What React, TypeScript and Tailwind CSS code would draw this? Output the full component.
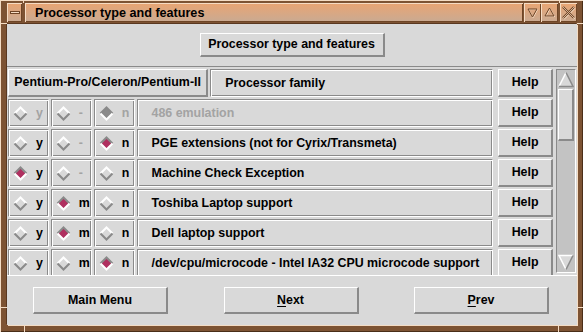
import React from "react";

const raised =
  "border-t border-l border-r-2 border-b-2 border-t-white border-l-white border-r-[#8a8a8a] border-b-[#8a8a8a]";
const groove =
  "border border-t-[#8a8a8a] border-l-[#8a8a8a] border-r-white border-b-white shadow-[inset_1px_1px_0_#ffffff,inset_-1px_-1px_0_#8a8a8a]";

function Diamond({ on, disabled }: { on: boolean; disabled?: boolean }) {
  const top = on ? "#8a8a8a" : "#ffffff";
  const bottom = on ? "#ffffff" : "#8a8a8a";
  const fill = on ? (disabled ? "#8c8c8c" : "#b03060") : "none";
  return (
    <svg width="15" height="15" viewBox="0 0 15 15" className="shrink-0">
      <polygon points="7.5,1.5 13.5,7.5 7.5,13.5 1.5,7.5" fill={fill} />
      <polyline points="1.5,7.5 7.5,1.5 13.5,7.5" fill="none" stroke={top} strokeWidth="2" />
      <polyline points="13.5,7.5 7.5,13.5 1.5,7.5" fill="none" stroke={bottom} strokeWidth="2" />
    </svg>
  );
}

function Cell({
  letter,
  on,
  disabled,
}: {
  letter: string;
  on: boolean;
  disabled?: boolean;
}) {
  return (
    <div className={`w-[41px] h-full flex items-center pl-[4px] gap-[8px] ${groove}`}>
      <Diamond on={on} disabled={disabled} />
      <span className={disabled ? "text-[#a3a3a3]" : "text-black"}>{letter}</span>
    </div>
  );
}

type Row = {
  label: string;
  disabled?: boolean;
  sel: "y" | "m" | "n";
  hasM: boolean;
};

const rows: Row[] = [
  { label: "486 emulation", disabled: true, sel: "n", hasM: false },
  { label: "PGE extensions (not for Cyrix/Transmeta)", sel: "n", hasM: false },
  { label: "Machine Check Exception", sel: "y", hasM: false },
  { label: "Toshiba Laptop support", sel: "m", hasM: true },
  { label: "Dell laptop support", sel: "m", hasM: true },
  { label: "/dev/cpu/microcode - Intel IA32 CPU microcode support", sel: "n", hasM: true },
];

function HelpBtn() {
  return (
    <div className={`w-[55px] h-full flex items-center justify-center ${raised}`}>Help</div>
  );
}

function TitleBtn({ children }: { children: React.ReactNode }) {
  return (
    <div className="w-[17px] h-full bg-gradient-to-b from-[#e9a472] to-[#c9aa92] shadow-[inset_1px_1px_0_#f6dcc4,inset_-1px_-1px_0_#6e4526] flex items-center justify-center">
      {children}
    </div>
  );
}

export default function App() {
  return (
    <div className="w-[583px] h-[332px] bg-[#7d5333] relative overflow-hidden shadow-[inset_1px_1px_0_#f4dcc4,inset_-1px_-1px_0_#4a2e18] font-['Liberation_Sans',Arial,sans-serif] font-bold text-[12.4px] text-black leading-none">
      {/* frame corner notches */}
      <div className="absolute left-[23px] top-0 w-[1px] h-[3px] bg-[#f4dcc4]" />
      <div className="absolute left-[559px] top-0 w-[1px] h-[3px] bg-[#f4dcc4]" />
      <div className="absolute left-0 top-[23px] w-[7px] h-[1px] bg-[#f4dcc4]" />
      <div className="absolute right-0 top-[23px] w-[6px] h-[1px] bg-[#f4dcc4]" />
      <div className="absolute left-0 top-[307px] w-[7px] h-[1px] bg-[#f4dcc4]" />
      <div className="absolute right-0 top-[307px] w-[6px] h-[1px] bg-[#f4dcc4]" />
      <div className="absolute left-[24px] bottom-0 w-[1px] h-[7px] bg-[#f4dcc4]" />
      <div className="absolute left-[558px] bottom-0 w-[1px] h-[7px] bg-[#f4dcc4]" />

      <div className="flex flex-col h-full pl-[7px] pr-[6px] pt-[3px] pb-[7px]">
        {/* title bar */}
        <div className="h-[19px] flex shrink-0 mb-[2px]">
          <div className="w-[15px] h-full bg-gradient-to-b from-[#e9a472] to-[#c9aa92] shadow-[inset_1px_1px_0_#f6dcc4,inset_-1px_-1px_0_#6e4526] flex items-center justify-center">
            <div className="w-[10px] h-[3px] bg-[#f6dcc4] border border-[#6e4526]" />
          </div>
          <div className="w-[3px]" />
          <div className="flex-1 h-full bg-gradient-to-b from-[#e9a472] to-[#c9aa92] shadow-[inset_1px_1px_0_#f6dcc4,inset_-1px_-1px_0_#6e4526] flex items-center pl-[10px] pt-[2px] text-[12.6px]">
            Processor type and features
          </div>
          <div className="w-[1px]" />
          <TitleBtn>
            <svg width="13" height="13" viewBox="0 0 13 13">
              <polygon points="2,3 11,3 6.5,11" fill="none" stroke="#f6dcc4" strokeWidth="1" transform="translate(0.6,0.6)" />
              <polygon points="2,3 11,3 6.5,11" fill="none" stroke="#6e4526" strokeWidth="1" />
            </svg>
          </TitleBtn>
          <TitleBtn>
            <svg width="13" height="13" viewBox="0 0 13 13">
              <polygon points="6.5,2 11,10 2,10" fill="none" stroke="#f6dcc4" strokeWidth="1" transform="translate(0.6,0.6)" />
              <polygon points="6.5,2 11,10 2,10" fill="none" stroke="#6e4526" strokeWidth="1" />
            </svg>
          </TitleBtn>
          <div className="w-[2px]" />
          <TitleBtn>
            <svg width="15" height="15" viewBox="0 0 15 15">
              <path d="M2,2 L13,13 M13,2 L2,13" fill="none" stroke="#f6dcc4" strokeWidth="2.4" transform="translate(0.6,0.6)" />
              <path d="M2,2 L13,13 M13,2 L2,13" fill="none" stroke="#6e4526" strokeWidth="2.4" />
              <path d="M2,2 L13,13 M13,2 L2,13" fill="none" stroke="#d8b294" strokeWidth="1" />
            </svg>
          </TitleBtn>
        </div>

        {/* content */}
        <div className="flex-1 bg-[#d9d9d9] flex flex-col shadow-[-1px_-1px_0_#5a3820,1px_1px_0_#f4dcc4]">
          <div className="pt-[9px] flex justify-center shrink-0">
            <div className={`w-[185px] h-[24px] flex items-center justify-center ${raised}`}>
              Processor type and features
            </div>
          </div>

          <div className="mt-[9px] h-[210px] border-t border-b border-t-[#8a8a8a] border-b-white flex shrink-0 overflow-hidden">
            <div className="flex-1 overflow-hidden pt-[2px] pl-[1px] flex flex-col gap-[2px]">
              <div className="h-[28px] flex gap-[2px] shrink-0">
                <div className={`w-[201px] h-full flex items-center justify-center ${raised}`}>
                  Pentium-Pro/Celeron/Pentium-II
                </div>
                <div className={`w-[284px] h-full flex items-center pl-[14px] ${groove}`}>
                  Processor family
                </div>
                <div className="w-[1px]" />
                <HelpBtn />
              </div>
              {rows.map((r) => (
                <div key={r.label} className="h-[28px] flex gap-[2px] shrink-0">
                  <Cell letter="y" on={r.sel === "y"} disabled={r.disabled} />
                  <Cell letter={r.hasM ? "m" : "-"} on={r.sel === "m"} disabled={r.disabled || !r.hasM} />
                  <Cell letter="n" on={r.sel === "n"} disabled={r.disabled} />
                  <div
                    className={`w-[358px] h-full flex items-center pl-[14px] ${groove} ${
                      r.disabled ? "text-[#a3a3a3]" : ""
                    }`}
                  >
                    {r.label}
                  </div>
                  <div className="w-[1px]" />
                  <HelpBtn />
                </div>
              ))}
            </div>

            {/* scrollbar */}
            <div className="w-[20px] ml-[3px] mr-[1px] mt-[2px] h-[204px] bg-[#c3c3c3] border border-t-[#8a8a8a] border-l-[#8a8a8a] border-r-white border-b-white flex flex-col items-stretch p-[1px] shrink-0">
              <svg width="16" height="17" viewBox="0 0 16 17" className="shrink-0">
                <polygon points="1,15.5 8,1.5 15,15.5" fill="#d9d9d9" />
                <polyline points="1,15.5 8,1.5" stroke="#ffffff" strokeWidth="1.5" fill="none" />
                <polyline points="8,1.5 15,15.5 1,15.5" stroke="#8a8a8a" strokeWidth="1.5" fill="none" />
              </svg>
              <div className={`mt-[1px] h-[52px] bg-[#d9d9d9] shrink-0 ${raised}`} />
              <div className="flex-1" />
              <svg width="16" height="17" viewBox="0 0 16 17" className="shrink-0">
                <polygon points="1,1.5 15,1.5 8,15.5" fill="#d9d9d9" />
                <polyline points="8,15.5 1,1.5 15,1.5" stroke="#ffffff" strokeWidth="1.5" fill="none" />
                <polyline points="15,1.5 8,15.5" stroke="#8a8a8a" strokeWidth="1.5" fill="none" />
              </svg>
            </div>
          </div>

          <div className="flex-1 flex items-start justify-between pl-[26px] pr-[28px] pt-[11px]">
            <div className={`w-[135px] h-[27px] flex items-center justify-center ${raised}`}>
              Main Menu
            </div>
            <div className={`w-[135px] h-[27px] flex items-center justify-center ${raised}`}>
              <span>
                <span className="underline underline-offset-2">N</span>ext
              </span>
            </div>
            <div className={`w-[135px] h-[27px] flex items-center justify-center ${raised}`}>
              <span>
                <span className="underline underline-offset-2">P</span>rev
              </span>
            </div>
          </div>
        </div>
      </div>
    </div>
  );
}
